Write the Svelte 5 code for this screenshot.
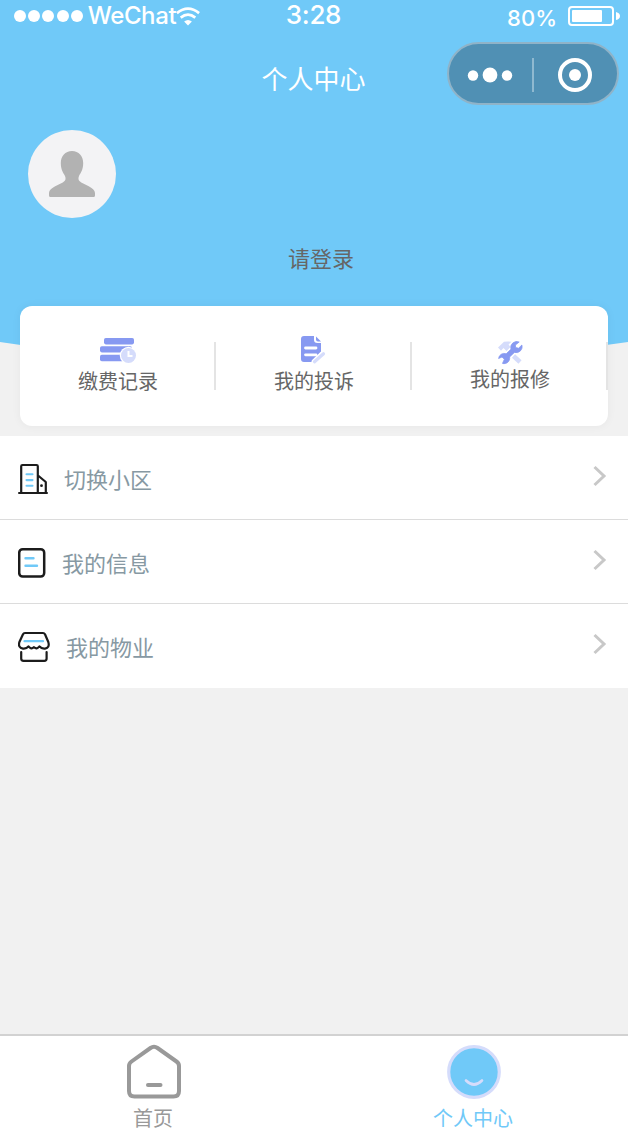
<script>
  const actions = [
    { id: "fee", label: "缴费记录" },
    { id: "complaint", label: "我的投诉" },
    { id: "repair", label: "我的报修" },
  ];
  const rows = [
    { id: "community", label: "切换小区" },
    { id: "info", label: "我的信息" },
    { id: "property", label: "我的物业" },
  ];
  const signal = [1, 2, 3, 4, 5];
</script>

<div class="page">
  <header>
    <svg class="curve" viewBox="0 0 628 390" width="628" height="390">
      <path d="M0 0H628V342Q314 390 0 342Z" fill="#70c9f8" />
    </svg>
    <div class="status">
      <div class="carrier">
        <div class="signal">
          {#each signal as dot (dot)}<i></i>{/each}
        </div>
        <span class="name">WeChat</span>
        <svg class="wifi" width="24" height="19" viewBox="0 0 24 19" fill="none" stroke="#fff" stroke-width="2.7">
          <path d="M0.9 6.1Q12 -2.9 23.1 6.1" />
          <path d="M4.7 10.6Q12 4.7 19.3 10.6" />
          <path d="M12 18.4L8.1 14.5Q12 11.5 15.9 14.5Z" fill="#fff" stroke="none" />
        </svg>
      </div>
      <span class="time">3:28</span>
      <div class="power">
        <span>80%</span>
        <svg width="52" height="20" viewBox="0 0 52 20">
          <rect x="1" y="1" width="44" height="18" rx="3" fill="none" stroke="#fff" stroke-width="2" />
          <rect x="4" y="4" width="30" height="12" rx="1" fill="#fff" />
          <path d="M48 6Q52 7 52 10Q52 13 48 14Z" fill="#fff" />
        </svg>
      </div>
    </div>
    <div class="nav">
      <h1>个人中心</h1>
      <div class="capsule">
        <svg width="168" height="60" viewBox="0 0 168 60">
          <g fill="#fff">
            <circle cx="24" cy="31.5" r="5.2" />
            <circle cx="41" cy="31" r="7.4" />
            <circle cx="58" cy="31.5" r="5.2" />
            <circle cx="126" cy="31" r="6" />
          </g>
          <path d="M84 14V48" stroke="#8fb9d0" stroke-width="2" />
          <circle cx="126" cy="31" r="15" fill="none" stroke="#fff" stroke-width="4" />
        </svg>
      </div>
    </div>
    <div class="avatar">
      <svg width="88" height="88" viewBox="0 0 88 88">
        <path
          d="M44 21C50.8 21 55.2 26 55.2 33C55.2 40 52.5 43 51 46Q49.5 49.5 52 51.5C55.5 54.5 67 57.5 67 63V65.5Q67 67 65.5 67H22.5Q21 67 21 65.5V63C21 57.5 32.5 54.5 36 51.5Q38.5 49.5 37 46C35.5 43 32.8 40 32.8 33C32.8 26 37.2 21 44 21Z"
          fill="#b2b2b2"
        />
      </svg>
    </div>
    <div class="login">请登录</div>
  </header>

  <section class="card">
    {#each actions as item (item.id)}
      <div class="action {item.id}">
        <svg width="40" height="32" viewBox="0 0 40 32">
          {#if item.id === "fee"}
            <g fill="#8799f1">
              <rect x="6" y="4" width="30" height="6.4" rx="1.8" />
              <rect x="2" y="12.2" width="32" height="6.2" rx="1.8" />
              <rect x="2" y="20.8" width="30" height="6.4" rx="1.8" />
            </g>
            <circle cx="30.5" cy="21.5" r="8.7" fill="#fff" />
            <circle cx="30.5" cy="21.5" r="7.5" fill="#d5dcfb" />
            <path d="M30.5 17V22H34.5" fill="none" stroke="#fff" stroke-width="2" />
          {:else if item.id === "complaint"}
            <path d="M10 2H20V6Q20 9 23.5 9H27V18L17 28H10Q7 28 7 25V5Q7 2 10 2Z" fill="#8799f1" />
            <path d="M22 2.5L27 7.5H24Q22 7.5 22 5.5Z" fill="#8799f1" />
            <path d="M11.5 14H22M11.5 20.8H22" stroke="#fff" stroke-width="2.8" stroke-linecap="round" />
            <path d="M20 29L30.5 19" stroke="#fff" stroke-width="7" />
            <path d="M20.5 27.8L29.5 19.8" stroke="#d5dcfb" stroke-width="3.2" stroke-linecap="round" />
          {:else}
            <path d="M8 13.5L14 7.8Q17 7 21.5 7.8L18.5 10.5L20.5 13L16.5 17L13.5 14L11 16.8Z" fill="#d5dcfb" />
            <path d="M23.5 22L30 28" stroke="#d5dcfb" stroke-width="4.6" />
            <path
              d="M29.2 8A6 6 0 0 0 21 15.2L16.2 19.8A5.600 5.600 0 0 0 8.6 24.500L12 23L14.4 25.2L12.5 29.4A5.600 5.600 0 0 0 19.600 23L24.400 18.400A6 6 0 0 0 31.9 11L28.6 14.2L25.6 13.6L25.4 11Z"
              fill="#8799f1"
              stroke="#8799f1"
              stroke-width="0.8"
              stroke-linejoin="round"
            />
          {/if}
        </svg>
        <span>{item.label}</span>
      </div>
    {/each}
  </section>

  <ul class="list">
    {#each rows as row (row.id)}
      <li class={row.id}>
        <svg class="icon" width="32" height="32" viewBox="0 0 32 32" fill="none" stroke-linecap="round" stroke-linejoin="round">
          {#if row.id === "community"}
            <path d="M3.2 30.5V4.3Q3.2 3 4.5 3H18.5Q19.8 3 19.8 4.3V30.5M20 13.5L27.8 20V30.5" stroke="#1c1c1c" stroke-width="2.2" />
            <path d="M1 31H29" stroke="#1c1c1c" stroke-width="2" />
            <path d="M8.5 12.3H14.5M8.5 18.1H14.5M8.5 23.8H14.5" stroke="#70c9f8" stroke-width="2.1" />
            <circle cx="23.5" cy="23.7" r="1.4" fill="#1c1c1c" />
          {:else if row.id === "info"}
            <rect x="1.2" y="3.2" width="25" height="27.4" rx="3.5" stroke="#1c1c1c" stroke-width="2.5" />
            <path d="M7.5 12.3H15.5M7.5 19.8H19" stroke="#70c9f8" stroke-width="2.4" />
          {:else}
            <path
              d="M7 3H25Q26.3 3 27 4.3L30.3 12Q32 17.600 27 18.600Q23.5 19 21.5 16.400Q18.8 19.8 16 17.2Q13 19.8 10.5 16.400Q8.5 19 5 18.600Q-0.200 17.6 1.4 12L5 4.3Q5.5 3 7 3Z"
              stroke="#1c1c1c"
              stroke-width="2.2"
            />
            <path d="M3.2 22V28.5Q3.2 30.8 5.5 30.8H26.3Q28.6 30.8 28.6 28.5V22" stroke="#1c1c1c" stroke-width="2.2" />
            <path d="M6.5 11.2H25" stroke="#70c9f8" stroke-width="2.2" />
          {/if}
        </svg>
        <span>{row.label}</span>
        <svg class="arrow" width="16" height="24" viewBox="0 0 16 24">
          <path d="M2.5 3L12 12L2.5 21" fill="none" stroke="#c8c8c8" stroke-width="3" />
        </svg>
      </li>
    {/each}
  </ul>

  <footer>
    <div class="tab">
      <svg width="56" height="56" viewBox="0 0 56 56" fill="none" stroke="#999" stroke-width="4" stroke-linejoin="round" stroke-linecap="round">
        <path d="M24.5 4Q28 1.5 31.5 4L50.5 17.5Q53 19.3 53 22V47Q53 52.5 47.5 52.5H8.5Q3 52.5 3 47V22Q3 19.3 5.5 17.5Z" />
        <path d="M22 41H34.5" />
      </svg>
      <span>首页</span>
    </div>
    <div class="tab active">
      <svg width="56" height="56" viewBox="0 0 56 56">
        <circle cx="28" cy="28" r="25.3" fill="#70c9f8" stroke="#d5dcfb" stroke-width="3.2" />
        <path d="M20 36.5Q28 44.5 36 36.5" fill="none" stroke="#d5dcfb" stroke-width="2.6" stroke-linecap="round" />
      </svg>
      <span>个人中心</span>
    </div>
  </footer>
</div>

<style>
  :global(body) {
    margin: 0;
  }
  .page {
    display: flex;
    flex-direction: column;
    width: 628px;
    height: 1128px;
    overflow: hidden;
    background: #f1f1f1;
    font-family: "Noto Sans CJK SC", sans-serif;
  }
  svg {
    display: block;
    flex: none;
  }
  header {
    position: relative;
    height: 306px;
    flex: none;
    color: #fff;
  }
  .curve {
    position: absolute;
    top: 0;
    left: 0;
  }
  .status {
    position: relative;
    display: grid;
    grid-template-columns: 1fr auto 1fr;
    height: 32px;
    padding: 0 8px;
    font-family: Inter, sans-serif;
    line-height: 32px;
  }
  .carrier,
  .power {
    display: flex;
  }
  .signal {
    display: flex;
    gap: 2.2px;
    padding: 10px 0 0 6px;
  }
  .signal i {
    width: 12px;
    height: 12px;
    border-radius: 50%;
    background: #fff;
  }
  .name {
    width: 88px;
    margin-left: 5px;
    font-size: 24px;
    font-weight: 500;
    letter-spacing: -0.4px;
    white-space: nowrap;
  }
  .wifi {
    margin: 7px 0 0;
  }
  .time {
    margin-left: -1px;
    font-size: 26px;
    font-weight: 500;
    letter-spacing: -0.3px;
    line-height: 30px;
  }
  .power {
    justify-content: flex-end;
    gap: 11px;
  }
  .power span {
    padding-top: 2px;
    font-size: 22px;
    font-weight: 500;
  }
  .power svg {
    margin-top: 6px;
  }
  .nav {
    position: relative;
    display: grid;
    grid-template-columns: 1fr auto 1fr;
    padding: 10px 9px 0 8px;
    height: 63px;
  }
  h1 {
    grid-column: 2;
    margin: 0;
    font-size: 26px;
    font-weight: 400;
    line-height: 72px;
  }
  .capsule {
    justify-self: end;
    width: 168px;
    height: 59px;
    border: 2px solid #8fb3c8;
    border-radius: 32px;
    background: #5090b4;
  }
  .avatar {
    position: relative;
    width: 88px;
    height: 88px;
    margin: 25px 0 0 28px;
    border-radius: 50%;
    background: #f3f3f5;
  }
  .login {
    position: relative;
    margin-top: 23px;
    padding-left: 14px;
    text-align: center;
    color: #666;
    font-size: 22px;
    line-height: 32px;
  }
  .card {
    position: relative;
    display: grid;
    grid-template-columns: repeat(3, 1fr);
    flex: none;
    height: 120px;
    margin: 0 20px 10px;
    border-radius: 12px;
    background: #fff;
    box-shadow: 0 0 10px rgba(0, 0, 0, 0.05);
  }
  .action {
    display: flex;
    flex-direction: column;
    align-items: center;
    padding-top: 28px;
    background: linear-gradient(#e4e4e4, #e4e4e4) no-repeat right 36px / 2px 48px;
    color: #666;
    font-size: 20px;
    line-height: 30px;
  }
  .repair span {
    margin-top: -2px;
  }
  .list {
    margin: 0;
    padding: 0;
    list-style: none;
    background: #fff;
  }
  li {
    display: flex;
    box-sizing: border-box;
    height: 84px;
    padding: 0 20px 0 18px;
    border-bottom: 1px solid #dcdcdc;
    color: #8799a3;
    font-size: 22px;
    line-height: 85px;
  }
  li:last-child {
    border: 0;
  }
  .icon {
    margin-top: 26px;
  }
  li span {
    margin-left: 14px;
  }
  .info span {
    margin-left: 12px;
  }
  .property span {
    margin-left: 16px;
  }
  .arrow {
    margin: 28px 0 0 auto;
  }
  footer {
    display: flex;
    box-sizing: border-box;
    height: 94px;
    margin-top: auto;
    border-top: 2px solid #d2d2d2;
    background: #fff;
  }
  .tab {
    display: flex;
    flex-direction: column;
    align-items: center;
    gap: 9px;
    width: 308px;
    padding-top: 8px;
    color: #999;
    font-size: 20px;
    line-height: 18px;
  }
  .tab span {
    margin-right: 2px;
  }
  .active {
    width: 332px;
    margin-right: -12px;
    color: #70c9f8;
  }
</style>
